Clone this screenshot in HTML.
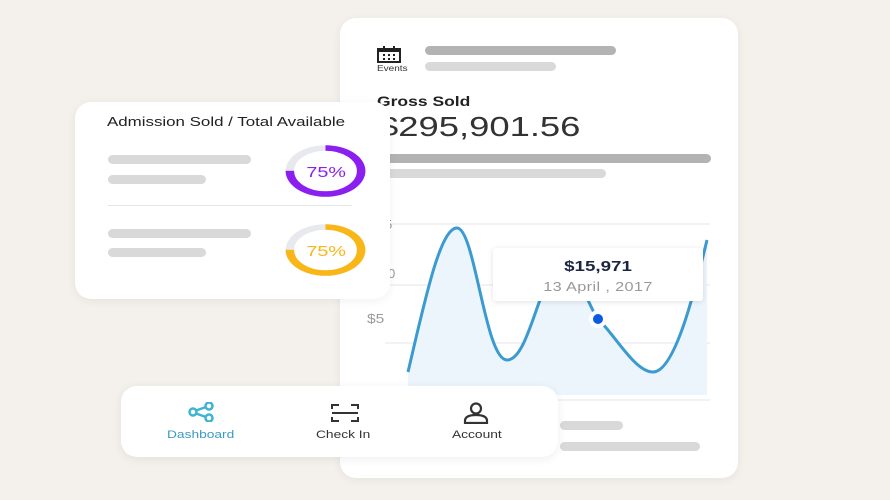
<!DOCTYPE html>
<html><head><style>
*{margin:0;padding:0;box-sizing:border-box}
body{width:890px;height:500px;background:#f4f0eb;position:relative;overflow:hidden;font-family:"Liberation Sans",sans-serif}
.card{position:absolute;background:#fff;border-radius:16px;box-shadow:0 2px 10px rgba(0,0,0,.06)}
.bar{position:absolute;border-radius:6px}
.d{background:#b3b3b3}.l{background:#d9d9d9}
.sx{transform:scaleX(1.25);transform-origin:left top;white-space:nowrap}
.sc{transform:scaleX(1.25);transform-origin:center top;white-space:nowrap}
</style></head><body>
<div class="card" style="left:340px;top:18px;width:398px;height:460px"></div>
<svg style="position:absolute;left:376px;top:46px" width="26" height="18" viewBox="0 0 26 18"><rect x="2" y="3" width="22" height="13" fill="none" stroke="#222" stroke-width="2"/><rect x="2" y="3" width="22" height="3" fill="#222"/><g fill="#222"><rect x="7" y="8" width="2" height="2"/><rect x="12" y="8" width="2" height="2"/><rect x="17" y="8" width="2" height="2"/><rect x="7" y="12" width="2" height="2"/><rect x="12" y="12" width="2" height="2"/><rect x="17" y="12" width="2" height="2"/><rect x="7" y="0" width="2" height="3"/><rect x="17" y="0" width="2" height="3"/></g></svg>
<div class="sx" style="position:absolute;left:377px;top:64px;font-size:8px;color:#333">Events</div>
<div class="bar d" style="left:425px;top:46px;width:191px;height:9px"></div>
<div class="bar l" style="left:425px;top:62px;width:131px;height:9px"></div>
<div class="sx" style="position:absolute;left:377px;top:93px;font-size:14px;font-weight:bold;color:#222">Gross Sold</div>
<div class="sx" style="position:absolute;left:378px;top:111px;font-size:28px;color:#333;transform:scaleX(1.3)">$295,901.56</div>
<div class="bar d" style="left:385px;top:154px;width:326px;height:9px"></div>
<div class="bar l" style="left:385px;top:169px;width:221px;height:9px"></div>
<svg style="position:absolute;left:340px;top:200px" width="398" height="220" viewBox="340 200 398 220">
<g stroke="#e6e6ea" stroke-width="1"><line x1="385" y1="224" x2="710" y2="224"/><line x1="385" y1="285" x2="710" y2="285"/><line x1="385" y1="343" x2="710" y2="343"/><line x1="385" y1="400" x2="710" y2="400"/></g>
<path d="M408 372 C425 300,440 228,457 228 C475 228,485 360,507 360 C530 360,540 270,560 270 C580 270,590 310,598 319 C615 335,635 372,653 372 C675 372,695 290,707 240 L707 395 L408 395Z" fill="#edf5fc"/>
<path d="M408 372 C425 300,440 228,457 228 C475 228,485 360,507 360 C530 360,540 270,560 270 C580 270,590 310,598 319 C615 335,635 372,653 372 C675 372,695 290,707 240" fill="none" stroke="#3b9bd0" stroke-width="3"/>
<circle cx="598" cy="319" r="9" fill="#fff"/><circle cx="598" cy="319" r="5" fill="#0a5be0"/>
<text x="385" y="229" font-size="13" fill="#999" font-family="Liberation Sans">5</text>
<text x="388" y="278" font-size="13" fill="#999" font-family="Liberation Sans">0</text>
<text x="367" y="323" font-size="13" fill="#999" font-family="Liberation Sans" transform="translate(367 0) scale(1.2 1) translate(-367 0)">$5</text>
</svg>
<div class="card" style="left:493px;top:248px;width:210px;height:53px;border-radius:3px;box-shadow:0 1px 6px rgba(0,0,0,.12);text-align:center">
<div class="sc" style="font-size:15px;font-weight:bold;color:#1b2540;margin-top:10px">$15,971</div>
<div class="sc" style="font-size:13px;color:#999;margin-top:4px;letter-spacing:.3px">13 April , 2017</div></div>
<div class="bar l" style="left:560px;top:421px;width:63px;height:9px"></div>
<div class="bar l" style="left:560px;top:442px;width:140px;height:9px"></div>
<div class="card" style="left:75px;top:102px;width:315px;height:197px"></div>
<div class="sx" style="position:absolute;left:107px;top:114px;font-size:13px;color:#222;transform:scaleX(1.3)">Admission Sold / Total Available</div>
<div class="bar l" style="left:108px;top:155px;width:143px;height:9px"></div>
<div class="bar l" style="left:108px;top:175px;width:98px;height:9px"></div>
<div style="position:absolute;left:108px;top:205px;width:244px;height:1px;background:#e3e5ea"></div>
<div class="bar l" style="left:108px;top:229px;width:143px;height:9px"></div>
<div class="bar l" style="left:108px;top:248px;width:98px;height:9px"></div>
<svg style="position:absolute;left:280px;top:140px" width="90" height="150" viewBox="280 140 90 150">
<g transform="translate(325.5 0) scale(1.55 1) translate(-325.5 0)">
<circle cx="325.5" cy="171" r="23" fill="none" stroke="#e8e9ee" stroke-width="5.5"/>
<circle cx="325.5" cy="171" r="23" fill="none" stroke="#8a1ff0" stroke-width="5.5" stroke-dasharray="108.4 300" transform="rotate(-90 325.5 171)"/>
<circle cx="325.5" cy="250" r="23" fill="none" stroke="#e8e9ee" stroke-width="5.5"/>
<circle cx="325.5" cy="250" r="23" fill="none" stroke="#f9b617" stroke-width="5.5" stroke-dasharray="108.4 300" transform="rotate(-90 325.5 250)"/>
<g transform="translate(325.5 0) scale(0.85 1) translate(-325.5 0)">
<text x="326" y="177" text-anchor="middle" font-size="15" fill="#8a1ff0" font-family="Liberation Sans">75%</text>
<text x="326" y="256" text-anchor="middle" font-size="15" fill="#f9b617" font-family="Liberation Sans">75%</text>
</g></g>
</svg>
<div class="card" style="left:121px;top:386px;width:437px;height:71px;box-shadow:0 2px 10px rgba(0,0,0,.07)"></div>
<svg style="position:absolute;left:187px;top:402px" width="30" height="20" viewBox="0 0 30 20"><g fill="none" stroke="#3cb4d2" stroke-width="2.5"><circle cx="6" cy="10" r="3.5"/><circle cx="22" cy="4" r="3.5"/><circle cx="22" cy="16" r="3.5"/><line x1="9" y1="8.5" x2="19" y2="5"/><line x1="9" y1="11.5" x2="19" y2="15"/></g></svg>
<div class="sx" style="position:absolute;left:167px;top:429px;font-size:11px;color:#3c9bc4">Dashboard</div>
<svg style="position:absolute;left:330px;top:403px" width="30" height="20" viewBox="0 0 30 20"><g fill="none" stroke="#333" stroke-width="2"><path d="M2 6V2h7M21 2h7v4M28 14v4h-7M9 18H2v-4"/><line x1="2" y1="10" x2="28" y2="10"/></g></svg>
<div class="sx" style="position:absolute;left:316px;top:429px;font-size:11px;color:#333">Check In</div>
<svg style="position:absolute;left:463px;top:402px" width="26" height="22" viewBox="0 0 26 22"><g fill="none" stroke="#333" stroke-width="2.2"><circle cx="13" cy="6.5" r="5"/><path d="M2 21v-2c0-4 4-6 11-6s11 2 11 6v2z"/></g></svg>
<div class="sx" style="position:absolute;left:452px;top:429px;font-size:11px;color:#333">Account</div>
</body></html>
